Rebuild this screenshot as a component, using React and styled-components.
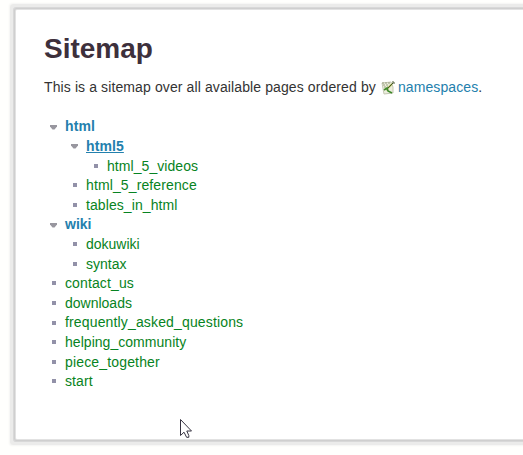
import React from "react";
import styled, { createGlobalStyle } from "styled-components";

const GlobalStyle = createGlobalStyle`
  html, body { margin: 0; }
  body {
    background: #fffffd;
    overflow: hidden;
    font: 14px/19.6px "Liberation Sans", Arial, sans-serif;
    color: #333;
  }
`;

const Page = styled.main`
  position: relative;
  box-sizing: border-box;
  height: 455px;
  padding: 10px 0 16px 16px;
  overflow: hidden;
`;

const Panel = styled.section`
  box-sizing: border-box;
  width: 540px;
  height: 429px;
  padding: 22px 28px 0;
  background: #fff;
  border-radius: 1px;
  box-shadow: 0 0 0 1px #e2e2e2, 0 0 0 2px #cfcfcf, 0 0 0 3px #d8d8d8, 0 0 0 6px #ebebea,
    0 0 2px 7px #f5f5f3;
`;

const Title = styled.h1`
  margin: 0;
  font-size: 28px;
  line-height: 34px;
  font-weight: bold;
  color: #3d303c;
`;

const Intro = styled.p`
  display: flex;
  align-items: center;
  margin: 12px 0 19.4px;
  height: 20px;
  white-space: pre;
  letter-spacing: 0.11px;
`;

const Link = styled.a`
  color: ${(p) => (p.$page ? "#078322" : "#2380ad")};
  font-weight: ${(p) => (p.$bold ? "bold" : "normal")};
  text-decoration: ${(p) => (p.$active ? "underline" : "none")};
  letter-spacing: ${(p) => p.$tracking || 0}px;
`;

const NoteIcon = styled.svg`
  width: 14px;
  height: 14px;
  margin: 0 3px 0 1px;
`;

const Tree = styled.ul`
  list-style: none;
  margin: 0;
  padding: 0 0 0 ${(p) => (p.$nested ? "21px" : "0")};
`;

const Row = styled.div`
  display: flex;
  align-items: center;
  height: 19.6px;
`;

const Marker = styled.svg`
  width: 21px;
  height: 10px;
  flex: none;
  margin-bottom: 1px;
`;

const Pointer = styled.svg`
  position: absolute;
  left: 180px;
  top: 419px;
  width: 13px;
  height: 20px;
`;

const sitemap = [
  {
    name: "html",
    tracking: 0.1,
    children: [
      {
        name: "html5",
        active: true,
        tracking: 0.1,
        children: [{ name: "html_5_videos", tracking: 0.06 }],
      },
      { name: "html_5_reference", tracking: 0.12 },
      { name: "tables_in_html", tracking: 0.08 },
    ],
  },
  { name: "wiki", children: [{ name: "dokuwiki" }, { name: "syntax" }] },
  { name: "contact_us", tracking: 0.12 },
  { name: "downloads" },
  { name: "frequently_asked_questions", tracking: 0.15 },
  { name: "helping_community", tracking: 0.04 },
  { name: "piece_together", tracking: 0.16 },
  { name: "start", tracking: 0.1 },
];

function Branch({ items, nested }) {
  return (
    <Tree $nested={nested}>
      {items.map((item) => (
        <li key={item.name}>
          <Row>
            <Marker viewBox="0 0 21 10" aria-hidden="true">
              {item.children ? (
                <path d="M6 3h7v1.5l-2.5 3h-2L6 4.5z" fill="#98979f" />
              ) : (
                <path d="M8 3h4v4H8z" fill="#9291a8" />
              )}
            </Marker>
            <Link
              $page={!item.children}
              $bold={!!item.children}
              $active={item.active}
              $tracking={item.tracking}
            >
              {item.name}
            </Link>
          </Row>
          {item.children && <Branch items={item.children} nested />}
        </li>
      ))}
    </Tree>
  );
}

export default function App() {
  return (
    <>
      <GlobalStyle />
      <Page>
        <Panel>
          <Title>Sitemap</Title>
          <Intro>
            {"This is a sitemap over all available pages ordered by "}
            <NoteIcon viewBox="0 0 14 14" aria-hidden="true">
              <path d="M1 2l9-1 2 5v6l-9 1z" fill="#eceedd" stroke="#c4c7b2" />
              <path d="M1 2h8M2 4h6M3 6h4" stroke="#9a9f82" strokeDasharray="2 1" />
              <path d="M5 9l6-6" stroke="#b9c268" strokeWidth="2" />
              <path d="M6 8l6-6" stroke="#43562b" />
              <path d="M3 9l3-2 1 3 4 2" fill="none" stroke="#3f8a2c" strokeWidth="1.7" />
              <path d="M11 1h2v2" fill="none" stroke="#4e5c36" />
            </NoteIcon>
            <Link $tracking={0.1}>namespaces</Link>.
          </Intro>
          <Branch items={sitemap} />
        </Panel>
        <Pointer viewBox="0 0 13 20" aria-hidden="true">
          <path
            d="M.5.5v16l3.5-3.3 2.6 5.1h2.2v-1.8L6.8 12h4.7z"
            fill="#fff"
            stroke="#363341"
          />
        </Pointer>
      </Page>
    </>
  );
}
